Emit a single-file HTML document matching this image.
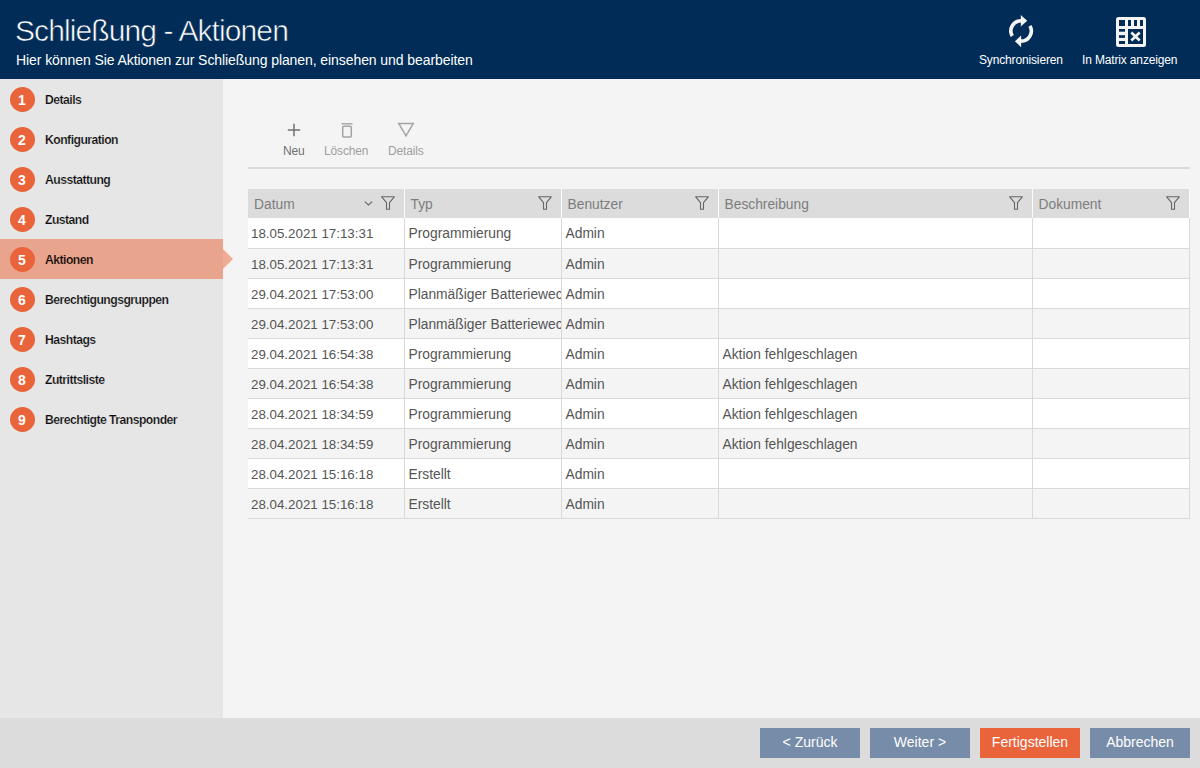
<!DOCTYPE html>
<html><head><meta charset="utf-8">
<style>
*{box-sizing:border-box;margin:0;padding:0}
html,body{width:1200px;height:768px;overflow:hidden;background:#f4f4f4;font-family:"Liberation Sans",sans-serif}
.hdr{position:absolute;left:0;top:0;width:1200px;height:79px;background:#002c57;color:#fff}
.title{position:absolute;left:15px;top:14px;-webkit-text-stroke:0.6px #002c57;font-size:30px;letter-spacing:-0.9px;white-space:nowrap;line-height:34px}
.sub{position:absolute;left:16px;top:52px;font-size:14px;letter-spacing:-0.08px;white-space:nowrap;line-height:17px}
.hbtn{position:absolute;top:53px;letter-spacing:-0.15px;font-size:12px;white-space:nowrap;line-height:15px;color:#fff}
.side{position:absolute;left:0;top:79px;width:223px;height:639px;background:#e6e6e6}
.item{position:absolute;left:0;width:223px;height:40px}
.item .num{position:absolute;left:10px;top:7.5px;width:25px;height:25px;border-radius:50%;background:#e9633b;color:#fff;font-weight:700;font-size:14px;text-align:center;line-height:27px;padding-right:1px}
.item .lbl{position:absolute;left:45px;top:1px;line-height:40px;font-size:12.2px;font-weight:700;color:#0a0a0a;letter-spacing:-0.53px;-webkit-text-stroke:0.2px #e6e6e6;white-space:nowrap}
.item.sel{background:#e8a48c}
.item.sel .lbl{-webkit-text-stroke-color:#e8a48c}
.arrow{position:absolute;left:223px;top:249px;width:0;height:0;border-top:10px solid transparent;border-bottom:10px solid transparent;border-left:10px solid #f0ab94}
.tb{position:absolute;top:0;font-size:12px;letter-spacing:-0.15px;white-space:nowrap;color:#a0a0a0;line-height:15px}
.sep{position:absolute;left:248px;top:167px;width:942px;height:2px;background:#dadada}
table{position:absolute;left:248px;top:189px;border-collapse:collapse;table-layout:fixed;width:941px}
th{height:29px;background:#dcdcdc;font-weight:400;color:#7d7d7d;font-size:13.8px;text-align:left;padding-left:6px;padding-top:2px;border-right:1px solid #fbfbfb;position:relative;white-space:nowrap}
td{height:30px;font-size:13.8px;color:#555;padding-left:4px;padding-top:2px;border-right:1px solid #d9d9d9;border-bottom:1px solid #d9d9d9;white-space:nowrap;overflow:hidden}
tr.g td{background:#f4f4f4}
td:first-child{font-size:13.33px;padding-left:3px}
tr.w td{background:#fff}
.flt{position:absolute;top:7px;right:9px;width:14px;height:14px}
.foot{position:absolute;left:0;top:718px;width:1200px;height:50px;background:#dcdcdc}
.btn{position:absolute;top:10px;width:100px;height:30px;background:#778ca9;color:#fff;font-size:14px;text-align:center;line-height:28px;white-space:nowrap}
.btn.o{background:#e9633b}
</style></head><body>
<div class="hdr">
  <div class="title">Schließung - Aktionen</div>
  <div class="sub">Hier können Sie Aktionen zur Schließung planen, einsehen und bearbeiten</div>
  <svg style="position:absolute;left:1000px;top:10px" width="45" height="45" viewBox="0 0 45 45">
    <path d="M12.27 26.0 A10.2 10.2 0 0 1 21.2 10.7" fill="none" stroke="#f4f4f4" stroke-width="3.6"/>
    <path d="M20.8 5 L27.2 10.7 L20.8 16.6 Z" fill="#f4f4f4"/>
    <path d="M29.93 15.8 A10.2 10.2 0 0 1 21 31.1" fill="none" stroke="#f4f4f4" stroke-width="3.6"/>
    <path d="M21.1 25.6 L14.9 31.3 L21.1 37.2 Z" fill="#f4f4f4"/>
  </svg>
  <svg style="position:absolute;left:1116px;top:17px" width="30" height="30" viewBox="0 0 30 30">
    <rect x="0" y="0" width="30" height="30" rx="2.5" fill="#f4f4f4"/>
    <g fill="#002c57">
      <rect x="3" y="3" width="6" height="6"/>
      <rect x="12" y="3" width="3" height="6"/>
      <rect x="18" y="3" width="3" height="6"/>
      <rect x="24" y="3" width="3" height="6"/>
      <rect x="3" y="12" width="6" height="2.7"/>
      <rect x="3" y="18.2" width="6" height="2.7"/>
      <rect x="3" y="24" width="6" height="3"/>
      <rect x="12" y="12" width="15" height="15"/>
    </g>
    <path d="M15.3 15.6 L23.7 23.4 M23.7 15.6 L15.3 23.4" stroke="#f4f4f4" stroke-width="2.7"/>
  </svg>
  <div class="hbtn" style="left:979px">Synchronisieren</div>
  <div class="hbtn" style="left:1082px">In Matrix anzeigen</div>
</div>

<div class="side">
  <div class="item" style="top:0"><div class="num">1</div><div class="lbl">Details</div></div>
  <div class="item" style="top:40px"><div class="num">2</div><div class="lbl">Konfiguration</div></div>
  <div class="item" style="top:80px"><div class="num">3</div><div class="lbl">Ausstattung</div></div>
  <div class="item" style="top:120px"><div class="num">4</div><div class="lbl">Zustand</div></div>
  <div class="item sel" style="top:160px"><div class="num">5</div><div class="lbl">Aktionen</div></div>
  <div class="item" style="top:200px"><div class="num">6</div><div class="lbl">Berechtigungsgruppen</div></div>
  <div class="item" style="top:240px"><div class="num">7</div><div class="lbl">Hashtags</div></div>
  <div class="item" style="top:280px"><div class="num">8</div><div class="lbl">Zutrittsliste</div></div>
  <div class="item" style="top:320px"><div class="num">9</div><div class="lbl">Berechtigte Transponder</div></div>
</div>
<div class="arrow"></div>

<!-- toolbar -->
<svg style="position:absolute;left:286px;top:122px" width="16" height="16" viewBox="0 0 16 16">
  <path d="M8 1.8 V14.2 M1.8 8 H14.2" stroke="#707070" stroke-width="1.5"/>
</svg>
<div class="tb" style="left:283px;top:144px;color:#707070">Neu</div>
<svg style="position:absolute;left:339px;top:121px" width="16" height="18" viewBox="0 0 16 18">
  <path d="M2.5 2.8 H13.5" stroke="#a3a3a3" stroke-width="1.4"/>
  <rect x="3.7" y="5.3" width="8.6" height="10.8" rx="1" fill="none" stroke="#a3a3a3" stroke-width="1.5"/>
</svg>
<div class="tb" style="left:324px;top:144px">Löschen</div>
<svg style="position:absolute;left:397px;top:122px" width="18" height="16" viewBox="0 0 18 16">
  <path d="M1.8 1.6 H16.2 L9 13.8 Z" fill="none" stroke="#a3a3a3" stroke-width="1.5" stroke-linejoin="miter"/>
</svg>
<div class="tb" style="left:388px;top:144px">Details</div>
<div class="sep"></div>

<table>
<colgroup><col style="width:156px"><col style="width:157px"><col style="width:157px"><col style="width:314px"><col style="width:157px"></colgroup>
<tr>
 <th>Datum<svg style="position:absolute;top:12px;right:31px" width="9" height="5" viewBox="0 0 9 5"><path d="M0.8 0.6 L4.5 4 L8.2 0.6" fill="none" stroke="#6a6a6a" stroke-width="1.2"/></svg><svg class="flt" viewBox="0 0 14 14"><path d="M0.7 0.8 H13.3 L8.5 6.7 V13.2 H5.5 V6.7 Z" fill="none" stroke="#666" stroke-width="1.1" stroke-linejoin="round"/></svg></th>
 <th>Typ<svg class="flt" viewBox="0 0 14 14"><path d="M0.7 0.8 H13.3 L8.5 6.7 V13.2 H5.5 V6.7 Z" fill="none" stroke="#666" stroke-width="1.1" stroke-linejoin="round"/></svg></th>
 <th>Benutzer<svg class="flt" viewBox="0 0 14 14"><path d="M0.7 0.8 H13.3 L8.5 6.7 V13.2 H5.5 V6.7 Z" fill="none" stroke="#666" stroke-width="1.1" stroke-linejoin="round"/></svg></th>
 <th>Beschreibung<svg class="flt" viewBox="0 0 14 14"><path d="M0.7 0.8 H13.3 L8.5 6.7 V13.2 H5.5 V6.7 Z" fill="none" stroke="#666" stroke-width="1.1" stroke-linejoin="round"/></svg></th>
 <th>Dokument<svg class="flt" viewBox="0 0 14 14"><path d="M0.7 0.8 H13.3 L8.5 6.7 V13.2 H5.5 V6.7 Z" fill="none" stroke="#666" stroke-width="1.1" stroke-linejoin="round"/></svg></th>
</tr>
<tr class="w"><td>18.05.2021 17:13:31</td><td>Programmierung</td><td>Admin</td><td></td><td></td></tr>
<tr class="g"><td>18.05.2021 17:13:31</td><td>Programmierung</td><td>Admin</td><td></td><td></td></tr>
<tr class="w"><td>29.04.2021 17:53:00</td><td>Planmäßiger Batteriewechsel</td><td>Admin</td><td></td><td></td></tr>
<tr class="g"><td>29.04.2021 17:53:00</td><td>Planmäßiger Batteriewechsel</td><td>Admin</td><td></td><td></td></tr>
<tr class="w"><td>29.04.2021 16:54:38</td><td>Programmierung</td><td>Admin</td><td>Aktion fehlgeschlagen</td><td></td></tr>
<tr class="g"><td>29.04.2021 16:54:38</td><td>Programmierung</td><td>Admin</td><td>Aktion fehlgeschlagen</td><td></td></tr>
<tr class="w"><td>28.04.2021 18:34:59</td><td>Programmierung</td><td>Admin</td><td>Aktion fehlgeschlagen</td><td></td></tr>
<tr class="g"><td>28.04.2021 18:34:59</td><td>Programmierung</td><td>Admin</td><td>Aktion fehlgeschlagen</td><td></td></tr>
<tr class="w"><td>28.04.2021 15:16:18</td><td>Erstellt</td><td>Admin</td><td></td><td></td></tr>
<tr class="g"><td>28.04.2021 15:16:18</td><td>Erstellt</td><td>Admin</td><td></td><td></td></tr>
</table>

<div class="foot">
  <div class="btn" style="left:760px">&lt; Zurück</div>
  <div class="btn" style="left:870px">Weiter &gt;</div>
  <div class="btn o" style="left:980px">Fertigstellen</div>
  <div class="btn" style="left:1090px">Abbrechen</div>
</div>
</body></html>
